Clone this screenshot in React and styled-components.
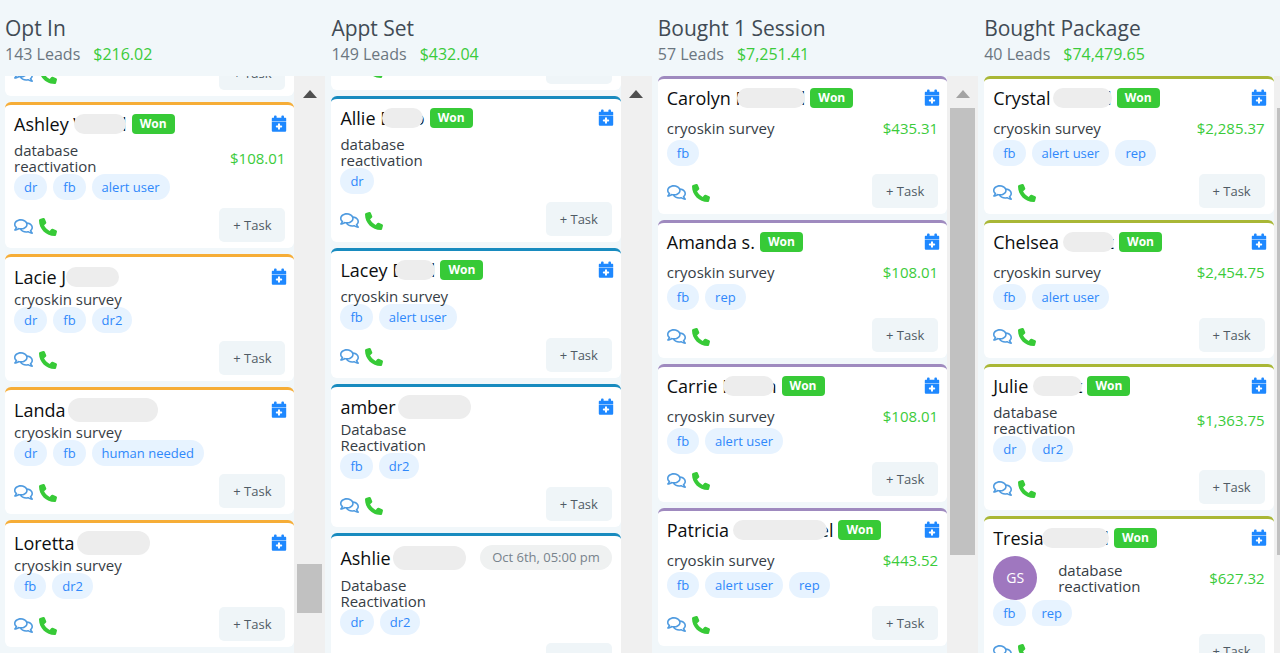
import React, { useLayoutEffect, useRef } from "react";
import styled, { createGlobalStyle } from "styled-components";
import { FaRegComments } from "react-icons/fa";
import { FaPhone } from "react-icons/fa6";

const GlobalStyle = createGlobalStyle`
  * {
    box-sizing: border-box;
  }
  body {
    margin: 0;
    background: #f1f7fa;
    font-family: "Open Sans", "Noto Sans", sans-serif;
    color: #363d45;
  }
`;

const Board = styled.main`
  display: grid;
  grid-template-columns: repeat(4, 25.5%);
  height: 100vh;
  overflow: hidden;
`;

const Column = styled.section`
  display: flex;
  flex-direction: column;
  min-height: 0;
  padding: 0 1px 0 5px;
`;

const ColumnHeader = styled.header`
  padding: 14px 0 9px;
`;

const Title = styled.h2`
  margin: 0;
  font-size: 21px;
  font-weight: 400;
  line-height: 28px;
  color: #414b55;
`;

const Totals = styled.p`
  display: flex;
  gap: 13px;
  margin: 0;
  font-size: 16px;
  line-height: 25px;
  color: #6b7680;
`;

const Money = styled.span`
  color: #3bcb3b;
`;

const ColumnBody = styled.div`
  display: flex;
  flex: 1;
  min-height: 0;
`;

const List = styled.div`
  display: flex;
  flex: 1;
  flex-direction: column;
  gap: 6px;
  min-width: 0;
  padding-bottom: 6px;
  overflow-y: auto;
  scrollbar-width: none;
`;

const Rail = styled.div`
  display: flex;
  flex-direction: column;
  align-items: center;
  width: 31px;
  background: #f0f0f0;
`;

const RailArrow = styled.span`
  width: 0;
  margin: 14px 0 10px;
  border: 7px solid transparent;
  border-top: 0;
  border-bottom: 8px solid ${(props) => (props.$muted ? "#a3a3a3" : "#505050")};
`;

const RailTrack = styled.div`
  position: relative;
  flex: 1;
  width: 25px;
`;

const Thumb = styled.div`
  position: absolute;
  left: 0;
  right: 0;
  background: #c1c1c1;
`;

const CardBox = styled.article`
  flex-shrink: 0;
  padding: 6px 9px;
  background: #fff;
  border-top: 3px solid ${(props) => props.$accent};
  border-radius: 6px;
`;

const NameRow = styled.div`
  display: flex;
  align-items: center;
  min-height: ${(props) => (props.$won ? 25 : props.$date ? 31 : 28)}px;
  margin-bottom: ${(props) => (props.$won ? 6 : props.$date ? 4 : 0)}px;
`;

const Name = styled.h3`
  display: flex;
  align-items: center;
  margin: 0;
  font-size: 18px;
  font-weight: 500;
  line-height: 24px;
  white-space: pre;
  color: #0c0e10;
`;

// Hides the surname, overlapping the letters on either side of it
const Mask = styled.span`
  position: relative;
  width: ${(props) => props.$width}px;
  height: ${(props) => (props.$tall ? 24 : 20)}px;
  margin-left: -${(props) => props.$left}px;
  margin-right: -${(props) => props.$right}px;
  border-radius: 12px;
  background: #ededed;
`;

const Won = styled.span`
  width: 43px;
  margin-left: 5px;
  border-radius: 4px;
  background: #37ca37;
  color: #fff;
  font-size: 12px;
  font-weight: 700;
  line-height: 20px;
  text-align: center;
`;

const DatePill = styled.time`
  margin-left: auto;
  padding: 0 12px;
  border-radius: 13px;
  background: #eff1f1;
  color: #78838c;
  font-size: 13px;
  line-height: 25px;
`;

const IconButton = styled.button`
  display: flex;
  padding: 0;
  border: 0;
  background: none;
  color: ${(props) => props.$color};
  font-size: ${(props) => props.$size}px;
  cursor: pointer;
`;

const CalendarButton = styled(IconButton)`
  margin: 0 -2px 0 auto;
`;

// Sits above the tags so that their pills do not cut the descenders
const Info = styled.div`
  position: relative;
  z-index: 1;
  display: flex;
  align-items: center;
  min-height: ${(props) => (props.$priced ? 24 : 16)}px;
`;

const Avatar = styled.span`
  width: 44px;
  margin-right: 21px;
  border-radius: 50%;
  background: #9f77bf;
  color: #fff;
  font-size: 14px;
  line-height: 44px;
  text-align: center;
`;

const Source = styled.p`
  width: ${(props) => (props.$wraps ? 90 : 130)}px;
  margin: 0;
  font-size: 15px;
  line-height: 16px;
`;

const Price = styled(Money)`
  margin-left: auto;
  font-size: 15px;
`;

const Tags = styled.ul`
  display: flex;
  gap: 6px;
  margin: 0 0 8px;
  padding: 0;
  list-style: none;
`;

const Tag = styled.li`
  padding: 0 10px;
  border-radius: 13px;
  background: #e7f3ff;
  color: #2f88fb;
  font-size: 13px;
  font-weight: 500;
  line-height: 26px;
`;

const Footer = styled.div`
  display: flex;
  align-items: center;
`;

const Contact = styled.div`
  display: flex;
  align-items: center;
  gap: 6px;
  padding-top: 3px;
`;

const TaskButton = styled.button`
  width: 66px;
  height: 34px;
  margin-left: auto;
  border: 0;
  border-radius: 5px;
  background: #eff5f8;
  color: #4f5b65;
  font-family: inherit;
  font-size: 13px;
  font-weight: 500;
`;

const columns = [
  {
    title: "Opt In",
    leads: 143,
    total: "$216.02",
    accent: "#f6ad37",
    scrollTop: 29,
    thumb: { top: 83.7, height: 9 },
    cards: [
      { id: 1 },
      { id: 2, name: "Ashley ", lead: "V", mask: { width: 52, left: 10, right: 4 }, tail: "l", won: true, source: "database reactivation", price: "$108.01", tags: ["dr", "fb", "alert user"] },
      { id: 3, name: "Lacie ", lead: "J", mask: { width: 53, left: 0, right: 0 }, source: "cryoskin survey", tags: ["dr", "fb", "dr2"] },
      { id: 4, name: "Landa ", mask: { width: 90, left: 2, right: 0, tall: true }, source: "cryoskin survey", tags: ["dr", "fb", "human needed"] },
      { id: 5, name: "Loretta ", mask: { width: 73, left: 2, right: 0, tall: true }, source: "cryoskin survey", tags: ["fb", "dr2"] },
    ],
  },
  {
    title: "Appt Set",
    leads: 149,
    total: "$432.04",
    accent: "#188bbf",
    scrollTop: 35,
    cards: [
      { id: 6 },
      { id: 7, name: "Allie ", lead: "B", mask: { width: 41, left: 10, right: 9 }, tail: "o", won: true, source: "database reactivation", tags: ["dr"] },
      { id: 8, name: "Lacey ", lead: "B", mask: { width: 40, left: 9, right: 4 }, tail: "l", won: true, source: "cryoskin survey", tags: ["fb", "alert user"] },
      { id: 9, name: "amber ", mask: { width: 73, left: 2, right: 0, tall: true }, source: "Database Reactivation", tags: ["fb", "dr2"] },
      { id: 10, name: "Ashlie ", mask: { width: 73, left: 2, right: 0, tall: true }, date: "Oct 6th, 05:00 pm", source: "Database Reactivation", tags: ["dr", "dr2"] },
    ],
  },
  {
    title: "Bought 1 Session",
    leads: 57,
    total: "$7,251.41",
    accent: "#9f8abf",
    atTop: true,
    thumb: { top: 0, height: 82 },
    cards: [
      { id: 11, name: "Carolyn ", lead: "R", mask: { width: 68, left: 10, right: 4 }, tail: "l", won: true, source: "cryoskin survey", price: "$435.31", tags: ["fb"] },
      { id: 12, name: "Amanda s.", won: true, source: "cryoskin survey", price: "$108.01", tags: ["fb", "rep"] },
      { id: 13, name: "Carrie ", lead: "F", mask: { width: 51, left: 8, right: 9 }, tail: "n", won: true, source: "cryoskin survey", price: "$108.01", tags: ["fb", "alert user"] },
      { id: 14, name: "Patricia ", mask: { width: 94, left: 1, right: 8 }, tail: "el", won: true, source: "cryoskin survey", price: "$443.52", tags: ["fb", "alert user", "rep"] },
    ],
  },
  {
    title: "Bought Package",
    leads: 40,
    total: "$74,479.65",
    accent: "#a9b736",
    atTop: true,
    thumb: { top: 0, height: 82 },
    cards: [
      { id: 15, name: "Crystal ", mask: { width: 59, left: 2, right: 5 }, tail: "l", won: true, source: "cryoskin survey", price: "$2,285.37", tags: ["fb", "alert user", "rep"] },
      { id: 16, name: "Chelsea ", mask: { width: 51, left: 1, right: 6 }, tail: "t", won: true, source: "cryoskin survey", price: "$2,454.75", tags: ["fb", "alert user"] },
      { id: 17, name: "Julie ", mask: { width: 49, left: 0, right: 6 }, tail: "t", won: true, source: "database reactivation", price: "$1,363.75", tags: ["dr", "dr2"] },
      { id: 18, name: "Tresia ", mask: { width: 67, left: 6, right: 5 }, tail: "l", won: true, initials: "GS", source: "database reactivation", price: "$627.32", tags: ["fb", "rep"] },
    ],
  },
];

function CalendarIcon() {
  return (
    <svg width="16" height="18" viewBox="0 0 16 18" fill="currentColor" aria-hidden="true">
      <rect x="3" y="0.4" width="2.6" height="4" rx="1" />
      <rect x="10.4" y="0.4" width="2.6" height="4" rx="1" />
      <path d="M1.8 2.8h12.4c.6 0 1 .4 1 1v2.3H.8V3.8c0-.6.4-1 1-1z" />
      <path d="M.8 6.6h14.4v8.8c0 .8-.6 1.4-1.4 1.4H2.2c-.8 0-1.4-.6-1.4-1.4z" />
      <path d="M8 9.3v4.4M5.8 11.5h4.4" stroke="#fff" strokeWidth="2" strokeLinecap="round" />
    </svg>
  );
}

function CardDetails({ card }) {
  return (
    <>
      <NameRow $won={card.won} $date={card.date}>
        <Name>
          {card.name}
          {card.lead}
          {card.mask && (
            <Mask $width={card.mask.width} $left={card.mask.left} $right={card.mask.right} $tall={card.mask.tall} />
          )}
          {card.tail}
        </Name>
        {card.won && <Won>Won</Won>}
        {card.date ? (
          <DatePill>{card.date}</DatePill>
        ) : (
          <CalendarButton $color="#1e88ff" $size={17} aria-label="Add appointment">
            <CalendarIcon />
          </CalendarButton>
        )}
      </NameRow>
      <Info $priced={card.price}>
        {card.initials && <Avatar>{card.initials}</Avatar>}
        <Source $wraps={/reactivation/i.test(card.source)}>{card.source}</Source>
        {card.price && <Price>{card.price}</Price>}
      </Info>
      <Tags>
        {card.tags.map((tag) => (
          <Tag key={tag}>{tag}</Tag>
        ))}
      </Tags>
    </>
  );
}

function Card({ card, accent }) {
  return (
    <CardBox $accent={accent}>
      {card.name && <CardDetails card={card} />}
      <Footer>
        <Contact>
          <IconButton $color="#4f9be0" $size={19} aria-label="Messages">
            <FaRegComments />
          </IconButton>
          <IconButton $color="#37ca37" $size={18} aria-label="Call">
            <FaPhone />
          </IconButton>
        </Contact>
        <TaskButton>+ Task</TaskButton>
      </Footer>
    </CardBox>
  );
}

function PipelineColumn({ column }) {
  const list = useRef(null);

  useLayoutEffect(() => {
    list.current.scrollTop = column.scrollTop || 0;
  }, [column.scrollTop]);

  return (
    <Column>
      <ColumnHeader>
        <Title>{column.title}</Title>
        <Totals>
          <span>{column.leads} Leads</span>
          <Money>{column.total}</Money>
        </Totals>
      </ColumnHeader>
      <ColumnBody>
        <List ref={list}>
          {column.cards.map((card) => (
            <Card key={card.id} card={card} accent={column.accent} />
          ))}
        </List>
        <Rail>
          <RailArrow $muted={column.atTop} />
          <RailTrack>
            {column.thumb && (
              <Thumb style={{ top: `${column.thumb.top}%`, height: `${column.thumb.height}%` }} />
            )}
          </RailTrack>
        </Rail>
      </ColumnBody>
    </Column>
  );
}

export default function App() {
  return (
    <>
      <GlobalStyle />
      <Board>
        {columns.map((column) => (
          <PipelineColumn key={column.title} column={column} />
        ))}
      </Board>
    </>
  );
}
